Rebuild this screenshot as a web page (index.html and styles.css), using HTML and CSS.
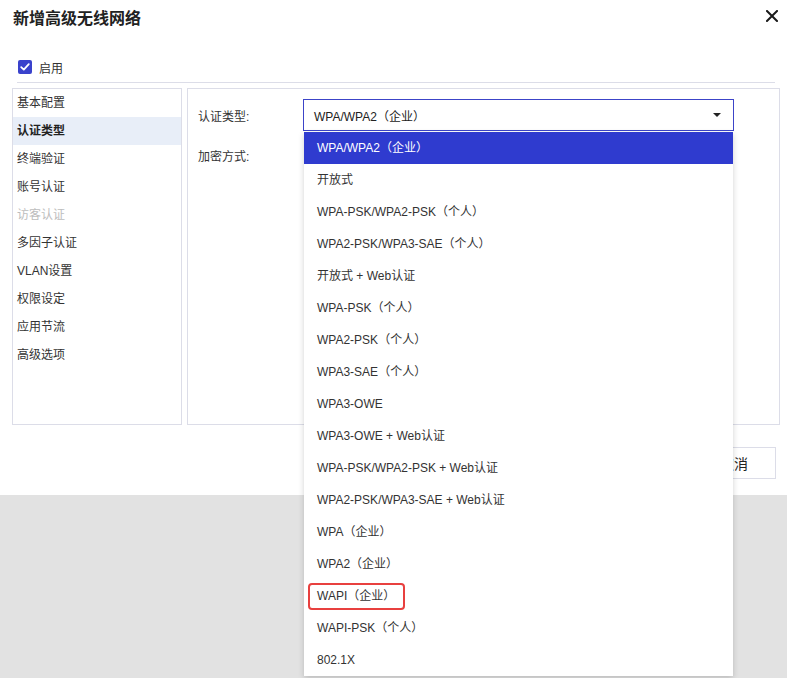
FILE: index.html
```html
<!DOCTYPE html>
<html lang="zh-CN">
<head>
<meta charset="utf-8">
<title>新增高级无线网络</title>
<link rel="stylesheet" href="styles.css">
</head>
<body>
<div class="dialog">
  <div class="header">
    <h1 class="title">新增高级无线网络</h1>
    <button class="close" aria-label="关闭">
      <svg width="12" height="12" viewBox="0 0 12 12"><path d="M1 1L11 11M11 1L1 11" stroke="#1a1a1a" stroke-width="2" stroke-linecap="square"/></svg>
    </button>
  </div>
  <label class="enable">
    <span class="checkbox"><svg width="14" height="14" viewBox="0 0 14 14"><path d="M3.2 7.1L5.8 9.6L10.8 4.2" fill="none" stroke="#fff" stroke-width="1.8" stroke-linecap="round" stroke-linejoin="round"/></svg></span>
    <span>启用</span>
  </label>
  <div class="divider"></div>
  <div class="content">
    <ul class="nav">
      <li>基本配置</li>
      <li class="active">认证类型</li>
      <li>终端验证</li>
      <li>账号认证</li>
      <li class="disabled">访客认证</li>
      <li>多因子认证</li>
      <li>VLAN设置</li>
      <li>权限设定</li>
      <li>应用节流</li>
      <li>高级选项</li>
    </ul>
    <div class="panel">
      <div class="form-row">
        <span class="label">认证类型:</span>
        <div class="select-wrap">
          <div class="select">
            <span>WPA/WPA2（企业）</span>
            <span class="arrow"></span>
          </div>
          <ul class="dropdown">
            <li class="selected">WPA/WPA2（企业）</li>
            <li>开放式</li>
            <li>WPA-PSK/WPA2-PSK（个人）</li>
            <li>WPA2-PSK/WPA3-SAE（个人）</li>
            <li>开放式 + Web认证</li>
            <li>WPA-PSK（个人）</li>
            <li>WPA2-PSK（个人）</li>
            <li>WPA3-SAE（个人）</li>
            <li>WPA3-OWE</li>
            <li>WPA3-OWE + Web认证</li>
            <li>WPA-PSK/WPA2-PSK + Web认证</li>
            <li>WPA2-PSK/WPA3-SAE + Web认证</li>
            <li>WPA（企业）</li>
            <li>WPA2（企业）</li>
            <li class="marked"><span class="mark">WAPI（企业）</span></li>
            <li>WAPI-PSK（个人）</li>
            <li>802.1X</li>
          </ul>
        </div>
      </div>
      <div class="form-row">
        <span class="label">加密方式:</span>
      </div>
    </div>
  </div>
  <div class="footer">
    <button class="btn primary">确定</button>
    <button class="btn">取消</button>
  </div>
</div>
</body>
</html>
```

FILE: styles.css
```css
* { box-sizing: border-box; }
html, body { margin: 0; padding: 0; }
body {
  background: #e2e2e2;
  font-family: "Liberation Sans", "Noto Sans CJK SC", sans-serif;
  font-size: 12px;
  color: #333;
  width: 787px;
  height: 678px;
  overflow: hidden;
}
.dialog {
  background: #fff;
  height: 495px;
  padding: 0 7px 0 12px;
}
.header {
  height: 52px;
  display: flex;
  justify-content: space-between;
  align-items: flex-start;
}
.title {
  margin: 0;
  padding-top: 8px;
  margin-left: 1px;
  font-size: 16px;
  line-height: 22px;
  font-weight: bold;
  color: #222;
}
.close {
  border: 0;
  background: none;
  padding: 0;
  margin: 10px 2px 0 0;
  width: 12px;
  height: 12px;
  display: flex;
}
.enable {
  height: 30px;
  display: flex;
  align-items: center;
  gap: 7px;
  padding-left: 6px;
  color: #333;
}
.checkbox {
  width: 14px;
  height: 14px;
  border-radius: 2px;
  background: #3a42cc;
  display: flex;
}
.divider {
  height: 1px;
  background: #dcdde8;
  margin: 0 5px 0 5px;
}
.content {
  display: flex;
  gap: 5px;
  margin-top: 5px;
  height: 337px;
}
.nav {
  list-style: none;
  margin: 0;
  padding: 0;
  width: 170px;
  border: 1px solid #dcdde8;
}
.nav li {
  height: 28px;
  line-height: 28px;
  padding-left: 4px;
  color: #333;
}
.nav li.active {
  background: #e8eef8;
  font-weight: bold;
  color: #222;
}
.nav li.disabled { color: #bdbdbd; }
.panel {
  flex: 1;
  border: 1px solid #dcdde8;
  padding: 10px 0 0 10px;
}
.form-row {
  display: flex;
  align-items: center;
  height: 32px;
  margin-bottom: 8px;
}
.label {
  width: 105px;
  color: #333;
}
.select-wrap {
  position: relative;
  width: 431px;
}
.select {
  height: 32px;
  border: 1px solid #3c44c8;
  display: flex;
  align-items: center;
  justify-content: space-between;
  padding: 0 12px 0 10px;
  color: #222;
}
.arrow {
  width: 0;
  height: 0;
  border-left: 4px solid transparent;
  border-right: 4px solid transparent;
  border-top: 4px solid #222;
}
.dropdown {
  position: absolute;
  left: 1px;
  top: 33px;
  width: 429px;
  margin: 0;
  padding: 0;
  list-style: none;
  background: #fff;
  box-shadow: 0 2px 6px rgba(0, 0, 0, 0.18);
  z-index: 10;
}
.dropdown li {
  height: 32px;
  line-height: 32px;
  padding-left: 13px;
  color: #333;
}
.dropdown li.selected {
  background: #2f3bcf;
  color: #fff;
}
.dropdown li.marked {
  padding-left: 4px;
  display: flex;
  align-items: center;
}
.mark {
  display: inline-block;
  line-height: 23px;
  padding: 0 8px 0 7px;
  border: 2px solid #e8403f;
  border-radius: 4px;
}
.footer {
  display: flex;
  justify-content: flex-end;
  gap: 8px;
  margin-top: 22px;
  padding-right: 4px;
}
.btn {
  width: 84px;
  height: 32px;
  border: 1px solid #dcdde8;
  background: #fff;
  font-family: inherit;
  font-size: 14px;
  color: #222;
}
.btn.primary {
  background: #2f3bcf;
  border-color: #2f3bcf;
  color: #fff;
}
```
